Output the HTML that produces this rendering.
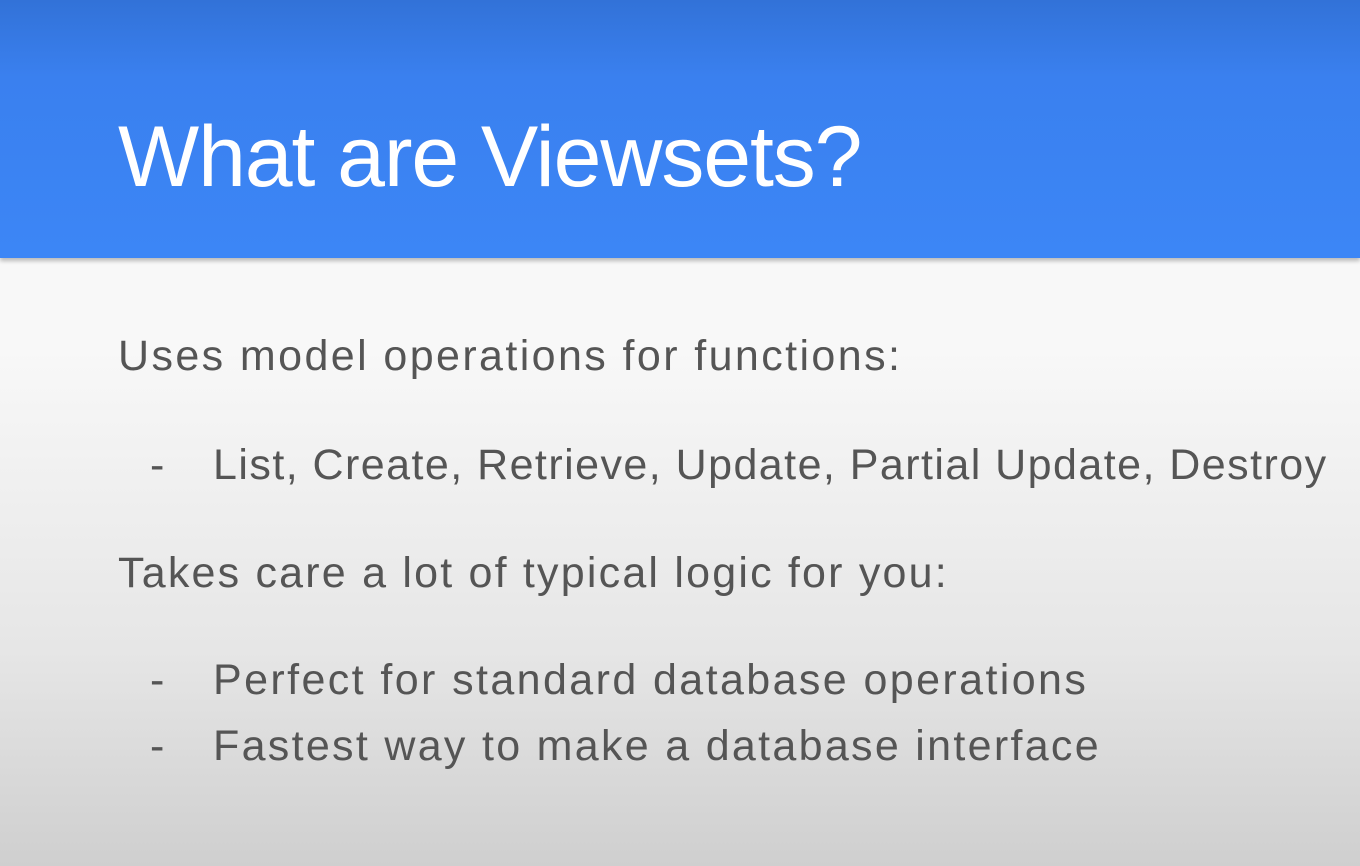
<!DOCTYPE html>
<html><head><style>
body{margin:0;width:1360px;height:866px;overflow:hidden;font-family:"Liberation Sans",sans-serif;background:linear-gradient(#fafafa 0%,#f8f8f8 40%,#e6e6e6 75%,#cfcfcf 100%);position:relative}
.h{position:absolute;left:0;top:0;width:1360px;height:258px;background:linear-gradient(#3272d8 0%,#3a80ef 30%,#3c86f6 100%);box-shadow:0 3px 4px rgba(0,0,0,.25)}
.t{position:absolute;left:118px;top:108px;font-size:86px;color:#fff;white-space:nowrap;letter-spacing:-1.1px}
.l{position:absolute;font-size:43px;color:#555;white-space:nowrap}
</style></head><body>
<div class="h"><div class="t">What are Viewsets?</div></div>
<div class="l" style="left:118px;top:332px;letter-spacing:2.4px">Uses model operations for functions:</div>
<div class="l" style="left:150px;top:441px">-</div>
<div class="l" style="left:213px;top:441px;letter-spacing:1.45px">List, Create, Retrieve, Update, Partial Update, Destroy</div>
<div class="l" style="left:118px;top:549px;letter-spacing:2.2px">Takes care a lot of typical logic for you:</div>
<div class="l" style="left:150px;top:656px">-</div>
<div class="l" style="left:213px;top:656px;letter-spacing:2.4px">Perfect for standard database operations</div>
<div class="l" style="left:150px;top:722px">-</div>
<div class="l" style="left:213px;top:722px;letter-spacing:2.3px">Fastest way to make a database interface</div>
</body></html>
